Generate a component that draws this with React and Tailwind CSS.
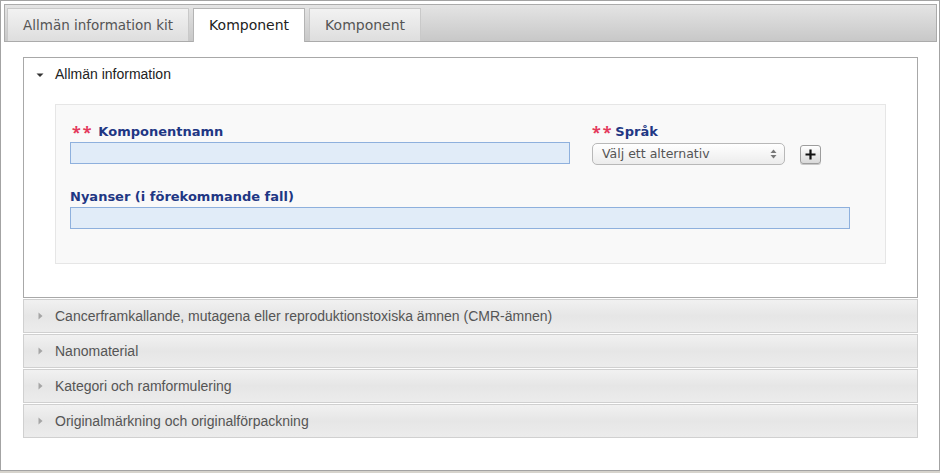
import React from 'react';

const verdana = { fontFamily: '"DejaVu Sans", Verdana, sans-serif' };
const arial = { fontFamily: '"Liberation Sans", Arial, sans-serif' };

const sections = [
    'Cancerframkallande, mutagena eller reproduktionstoxiska ämnen (CMR-ämnen)',
    'Nanomaterial',
    'Kategori och ramformulering',
    'Originalmärkning och originalförpackning',
];

const Required = ({ spaced }) => (
    <span className={`text-[#e4395c] font-bold text-[16px] leading-[16px] tracking-[2px] ${spaced ? 'ml-[2px] mr-[5px]' : 'mr-[2px]'}`}>
        **
    </span>
);

const Label = ({ children, required, spaced }) => (
    <div className="flex items-end h-[16px] mb-[2px] leading-[16px]">
        {required && <Required spaced={spaced} />}
        <span className="text-[13px] font-bold text-[#1f3784]" style={verdana}>
            {children}
        </span>
    </div>
);

const Tab = ({ label, active, size }) => (
    <div
        className={
            active
                ? 'relative h-[34px] mb-[-1px] px-[15px] flex items-center bg-white border border-b-0 border-[#b4b4b4] text-[#222]'
                : 'h-[33px] px-[15px] flex items-center border border-[#c9c9c9] border-b-0 bg-gradient-to-b from-[#f2f2f2] to-[#dedede] text-[#555]'
        }
        style={verdana}
    >
        <span className={size}>{label}</span>
    </div>
);

export default function App() {
    return (
        <div className="w-[940px] h-[473px] bg-[#d6d3cc] overflow-hidden">
            <div className="h-[471px] bg-white border border-[#a3a3a3] pt-[3px] pl-[3px] pr-[2px]">
                {/* tab bar */}
                <div className="h-[38px] border border-[#ababab] bg-gradient-to-b from-[#e4e4e4] to-[#c8c8c8] flex items-end gap-[4px] pl-[2px]">
                    <Tab label="Allmän information kit" size="text-[13.5px]" />
                    <Tab label="Komponent" size="text-[14px]" active />
                    <Tab label="Komponent" size="text-[14px]" />
                </div>

                <div className="mt-[15px] ml-[19px] mr-[19px]">
                    {/* open section */}
                    <div className="border border-[#a8a8a8] bg-white pb-[33px]">
                        <div className="h-[33px] flex items-center pl-[12px]" style={arial}>
                            <svg width="8" height="8" viewBox="0 0 8 8" className="mr-[11px]">
                                <path d="M0.5 2.5 L7.5 2.5 L4 6 Z" fill="#333" />
                            </svg>
                            <span className="text-[14px] text-[#222]">Allmän information</span>
                        </div>

                        <div className="mt-[13px] mx-[31px] bg-[#f9f9f9] border border-[#e6e6e6] pt-[19px] pb-[34px] pl-[14px]">
                            <div className="flex h-[40px]">
                                <div className="w-[500px]">
                                    <Label required spaced>Komponentnamn</Label>
                                    <div className="h-[22px] bg-[#e1ecf8] border border-[#8eb0dd]" />
                                </div>
                                <div className="ml-[22px] h-[40px]">
                                    <Label required>Språk</Label>
                                    <div className="flex items-start mt-[3px]">
                                        <div
                                            className="w-[193px] h-[22px] rounded-[5px] border border-[#b8b8b8] bg-gradient-to-b from-white to-[#ececec] flex items-center justify-between pl-[9px] pr-[7px] text-[#555]"
                                            style={verdana}
                                        >
                                            <span className="text-[12.5px]">Välj ett alternativ</span>
                                            <svg width="7" height="10" viewBox="0 0 7 10">
                                                <path d="M0.5 4 L3.5 0.5 L6.5 4 Z" fill="#777" />
                                                <path d="M0.5 6 L3.5 9.5 L6.5 6 Z" fill="#777" />
                                            </svg>
                                        </div>
                                        <div className="ml-[15px] mt-[2px] w-[21px] h-[19px] rounded-[3px] border border-[#9d9d9d] bg-gradient-to-b from-white to-[#d9d9d9] flex items-center justify-center shadow-[0_1px_0_#c8c8c8]">
                                            <svg width="11" height="11" viewBox="0 0 11 11">
                                                <path d="M5.5 0.5 V10.5 M0.5 5.5 H10.5" stroke="#111" strokeWidth="2.2" />
                                            </svg>
                                        </div>
                                    </div>
                                </div>
                            </div>

                            <div className="mt-[25px] w-[780px]">
                                <Label>Nyanser (i förekommande fall)</Label>
                                <div className="h-[22px] bg-[#e1ecf8] border border-[#8eb0dd]" />
                            </div>
                        </div>
                    </div>

                    {/* collapsed sections */}
                    {sections.map((title) => (
                        <div
                            key={title}
                            className="mt-[1px] h-[34px] border border-[#d0d0d0] bg-gradient-to-b from-[#f1f1f1] via-[#e6e6e6] to-[#ececec] flex items-center pl-[14px]"
                            style={arial}
                        >
                            <svg width="5" height="8" viewBox="0 0 5 8" className="mr-[12px]">
                                <path d="M0.5 0.5 L4.5 4 L0.5 7.5 Z" fill="#a5a5a5" />
                            </svg>
                            <span className="text-[14px] text-[#555]">{title}</span>
                        </div>
                    ))}
                </div>
            </div>
        </div>
    );
}
